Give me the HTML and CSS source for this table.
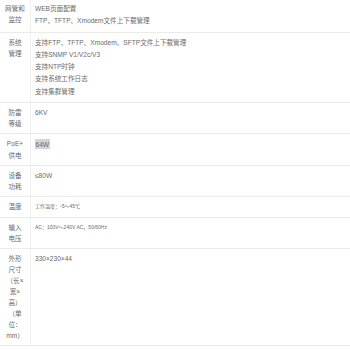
FILE: index.html
```html
<!DOCTYPE html>
<html lang="zh-CN">
<head>
<meta charset="utf-8">
<link rel="stylesheet" href="styles.css">
</head>
<body>
<table class="spec">
  <tr>
    <th>网管和<br>监控</th>
    <td><p>WEB页面配置</p><p>FTP、TFTP、Xmodem文件上下载管理</p></td>
  </tr>
  <tr>
    <th>系统<br>管理</th>
    <td><p>支持FTP、TFTP、Xmodem、SFTP文件上下载管理</p><p>支持SNMP V1/V2c/V3</p><p>支持NTP时钟</p><p>支持系统工作日志</p><p>支持集群管理</p></td>
  </tr>
  <tr>
    <th>防雷<br>等级</th>
    <td><p>6KV</p></td>
  </tr>
  <tr class="tall">
    <th>PoE+<br>供电</th>
    <td><p><span class="hl">64W</span></p></td>
  </tr>
  <tr>
    <th>设备<br>功耗</th>
    <td><p>≤80W</p></td>
  </tr>
  <tr>
    <th>温度</th>
    <td><p class="small">工作温度：-5～45℃</p></td>
  </tr>
  <tr>
    <th>输入<br>电压</th>
    <td><p class="small">AC：100V～240V AC，50/60Hz</p></td>
  </tr>
  <tr>
    <th class="dense">外形<br>尺寸<br>（长×<br>宽×<br>高）<br>（单<br>位：<br>mm）</th>
    <td><p>330×230×44</p></td>
  </tr>
</table>
</body>
</html>
```
FILE: styles.css
```css
html, body {
  margin: 0;
  padding: 0;
  background: #ffffff;
}

body {
  font-family: "Liberation Sans", "Noto Sans CJK SC", sans-serif;
  font-size: 6.6px;
  color: #6a6a6a;
}

.spec {
  width: 100%;
  border-collapse: collapse;
  margin-top: -2px;
}

.spec tr {
  border-top: 1px solid #ebebeb;
  border-bottom: 1px solid #ebebeb;
}

.spec th {
  width: 22px;
  padding: 4px 4px;
  font-weight: normal;
  text-align: center;
  vertical-align: top;
  line-height: 11.2px;
  border-right: 1px solid #efefef;
  white-space: nowrap;
}

.spec th.dense {
  line-height: 11px;
}

.spec td {
  padding: 4px 5px 4px 4px;
  vertical-align: top;
  text-align: left;
}

.spec tr.tall td {
  padding-bottom: 6px;
}

.spec p {
  margin: 0;
  line-height: 12.3px;
}

.spec p.small {
  font-size: 5px;
  line-height: 11.2px;
}

.hl {
  background: #d4d4d4;
  padding: 1.5px 0.5px;
}
```
